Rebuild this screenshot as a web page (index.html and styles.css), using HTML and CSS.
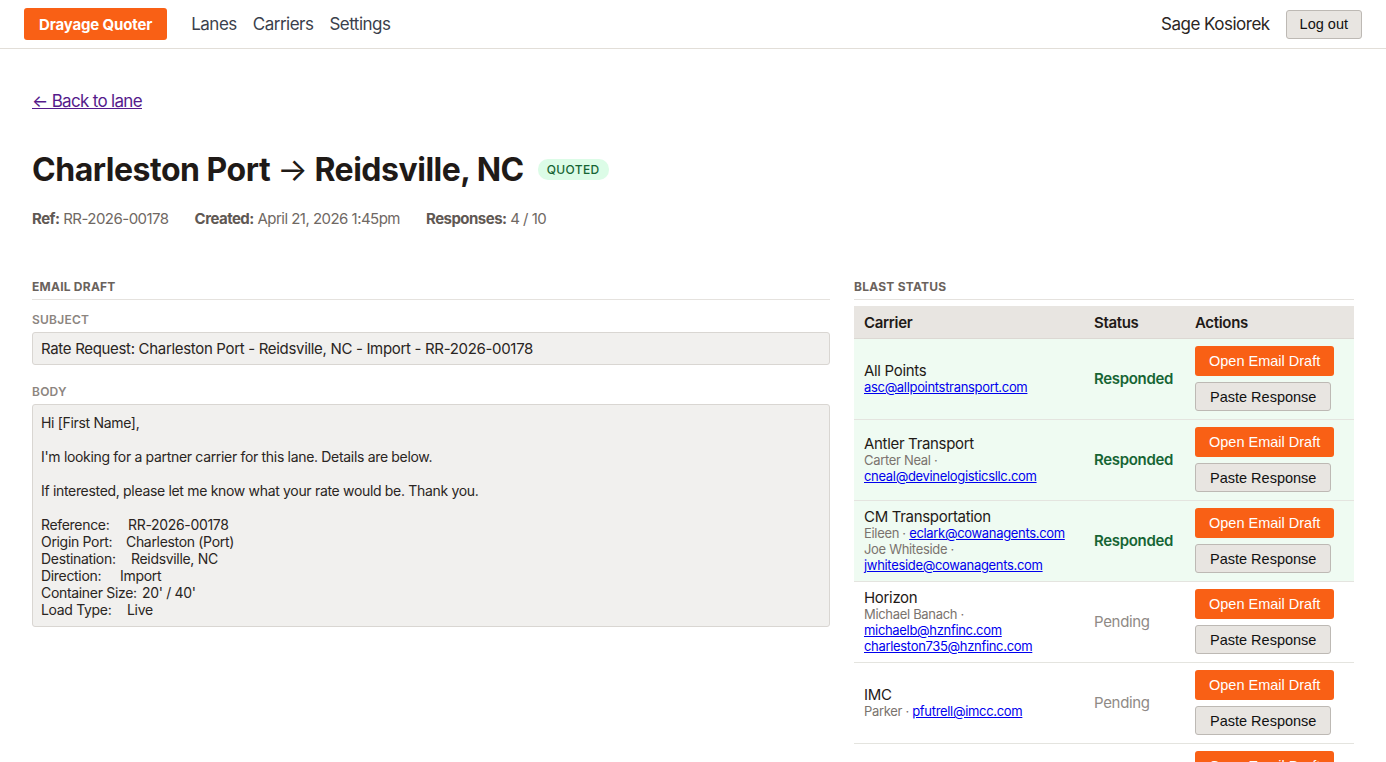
FILE: index.html
```html
<!DOCTYPE html>
<html lang="en">
<head>
    <meta charset="UTF-8">
    <meta name="viewport" content="width=device-width, initial-scale=1.0">
    <title>Charleston Port → Reidsville, NC · Drayage Quoter</title>
    <link rel="stylesheet" href="styles.css">
</head>
<body>

    <header class="topbar">
        <a href="#" class="brand">Drayage Quoter</a>
        <nav class="nav-links">
            <a href="#">Lanes</a>
            <a href="#">Carriers</a>
            <a href="#">Settings</a>
        </nav>
        <div class="user-box">
            <span class="user-name">Sage Kosiorek</span>
            <button class="btn-plain btn-logout">Log out</button>
        </div>
    </header>

    <main class="page">
        <p class="back"><a href="#">← Back to lane</a></p>

        <div class="title-row">
            <h1>Charleston Port <span class="arrow">→</span> Reidsville, NC</h1>
            <span class="badge">QUOTED</span>
        </div>

        <div class="meta">
            <span><b>Ref:</b> RR-2026-00178</span>
            <span><b>Created:</b> April 21, 2026 1:45pm</span>
            <span><b>Responses:</b> 4 / 10</span>
        </div>

        <div class="columns">
            <section>
                <h3 class="section-title">Email Draft</h3>
                <div class="field-label">Subject</div>
                <div class="field-box">Rate Request: Charleston Port - Reidsville, NC - Import - RR-2026-00178</div>

                <div class="field-label gap-top">Body</div>
                <div class="field-box body-text">Hi [First Name],

I'm looking for a partner carrier for this lane. Details are below.

If interested, please let me know what your rate would be. Thank you.

<span class="kv"><span class="k1">Reference:</span>RR-2026-00178</span>
<span class="kv"><span class="k2">Origin Port:</span>Charleston (Port)</span>
<span class="kv"><span class="k3">Destination:</span>Reidsville, NC</span>
<span class="kv"><span class="k4">Direction:</span>Import</span>
<span class="kv"><span class="k5">Container Size:</span>20' / 40'</span>
<span class="kv"><span class="k6">Load Type:</span>Live</span></div>
            </section>

            <section>
                <h3 class="section-title">Blast Status</h3>
                <table class="blast">
                    <thead>
                        <tr>
                            <th class="col-carrier">Carrier</th>
                            <th class="col-status">Status</th>
                            <th>Actions</th>
                        </tr>
                    </thead>
                    <tbody>
                        <tr class="responded">
                            <td>
                                <div class="carrier">All Points</div>
                                <div class="contact"><a href="#">asc@allpointstransport.com</a></div>
                            </td>
                            <td class="status ok">Responded</td>
                            <td class="actions">
                                <button class="btn-orange">Open Email Draft</button>
                                <button class="btn-plain">Paste Response</button>
                            </td>
                        </tr>
                        <tr class="responded">
                            <td>
                                <div class="carrier">Antler Transport</div>
                                <div class="contact">Carter Neal · <a href="#">cneal@devinelogisticsllc.com</a></div>
                            </td>
                            <td class="status ok">Responded</td>
                            <td class="actions">
                                <button class="btn-orange">Open Email Draft</button>
                                <button class="btn-plain">Paste Response</button>
                            </td>
                        </tr>
                        <tr class="responded">
                            <td>
                                <div class="carrier">CM Transportation</div>
                                <div class="contact">Eileen · <a href="#">eclark@cowanagents.com</a></div>
                                <div class="contact">Joe Whiteside · <a href="#">jwhiteside@cowanagents.com</a></div>
                            </td>
                            <td class="status ok">Responded</td>
                            <td class="actions">
                                <button class="btn-orange">Open Email Draft</button>
                                <button class="btn-plain">Paste Response</button>
                            </td>
                        </tr>
                        <tr>
                            <td>
                                <div class="carrier">Horizon</div>
                                <div class="contact">Michael Banach · <a href="#">michaelb@hznfinc.com</a> <a href="#">charleston735@hznfinc.com</a></div>
                            </td>
                            <td class="status">Pending</td>
                            <td class="actions">
                                <button class="btn-orange">Open Email Draft</button>
                                <button class="btn-plain">Paste Response</button>
                            </td>
                        </tr>
                        <tr>
                            <td>
                                <div class="carrier">IMC</div>
                                <div class="contact">Parker · <a href="#">pfutrell@imcc.com</a></div>
                            </td>
                            <td class="status">Pending</td>
                            <td class="actions">
                                <button class="btn-orange">Open Email Draft</button>
                                <button class="btn-plain">Paste Response</button>
                            </td>
                        </tr>
                        <tr>
                            <td>
                                <div class="carrier">Mercury Drayage</div>
                                <div class="contact">Dispatch · <a href="#">dispatch@mercurydray.com</a></div>
                            </td>
                            <td class="status">Pending</td>
                            <td class="actions">
                                <button class="btn-orange">Open Email Draft</button>
                                <button class="btn-plain">Paste Response</button>
                            </td>
                        </tr>
                    </tbody>
                </table>
            </section>
        </div>
    </main>

</body>
</html>
```

FILE: styles.css
```css
body {
    margin: 0;
    font-family: Inter, "Noto Sans", sans-serif;
    color: #1f1a17;
    background: #fff;
    letter-spacing: -0.02em;
}

/* top bar */
.topbar {
    display: flex;
    align-items: center;
    height: 48px;
    padding: 0 24px;
    border-bottom: 1px solid #e2ded8;
}

.brand {
    display: flex;
    align-items: center;
    height: 32px;
    padding: 0 15px;
    background: #f96015;
    color: #fff;
    font-size: 15px;
    font-weight: 700;
    text-decoration: none;
    border-radius: 3px;
    letter-spacing: -0.01em;
}

.nav-links {
    display: flex;
    gap: 16px;
    margin-left: 24px;
}

.nav-links a {
    color: #3b3f4c;
    font-size: 17px;
    text-decoration: none;
    letter-spacing: -0.03em;
}

.user-box {
    display: flex;
    align-items: center;
    gap: 16px;
    margin-left: auto;
}

.user-name {
    font-size: 17px;
    color: #2b2623;
    letter-spacing: -0.03em;
}

button {
    font-family: "Liberation Sans", Arial, sans-serif;
    font-size: 14.5px;
    letter-spacing: 0;
    cursor: pointer;
    border-radius: 3px;
}

.btn-plain {
    background: #e8e5e1;
    color: #111;
    border: 1px solid #bdb9b4;
    height: 29px;
    padding: 0 14px;
}

.btn-logout {
    padding: 0 13px;
}

.btn-orange {
    background: #f96015;
    color: #fff;
    border: none;
    height: 30px;
    padding: 0 14px;
}

/* page body */
.page {
    padding: 0 32px 40px;
}

.back {
    margin: 42px 0 0;
    font-size: 17px;
    letter-spacing: -0.04em;
}

.back a {
    color: #551a8b;
}

.title-row {
    display: flex;
    align-items: center;
    gap: 14px;
    margin-top: 39px;
}

h1 {
    margin: 0;
    font-size: 32px;
    font-weight: 700;
    letter-spacing: -0.015em;
    color: #1f1a17;
}

h1 .arrow {
    font-weight: 400;
}

.badge {
    background: #dcfce7;
    color: #166534;
    font-size: 12px;
    font-weight: 500;
    padding: 3px 9px;
    border-radius: 10px;
    letter-spacing: 0.03em;
}

.meta {
    display: flex;
    gap: 26px;
    margin-top: 20px;
    font-size: 15px;
    color: #6f6863;
    letter-spacing: -0.035em;
}

.meta b {
    font-weight: 700;
    color: #5f5853;
}

.columns {
    display: grid;
    grid-template-columns: 1fr 500px;
    gap: 24px;
    margin-top: 51px;
    align-items: start;
}

.section-title {
    margin: 0;
    padding-bottom: 5px;
    border-bottom: 1px solid #e5e2de;
    font-size: 12px;
    font-weight: 700;
    text-transform: uppercase;
    color: #6a625c;
    letter-spacing: 0.02em;
}

.field-label {
    margin-top: 12px;
    margin-bottom: 5px;
    font-size: 12px;
    font-weight: 600;
    text-transform: uppercase;
    color: #8c857f;
    letter-spacing: 0.02em;
}

.field-label.gap-top {
    margin-top: 19px;
}

.field-box {
    background: #f1f0ee;
    border: 1px solid #d9d6d2;
    border-radius: 3px;
    padding: 6px 8px;
    font-size: 15px;
    color: #2a2522;
}

.body-text {
    white-space: pre-wrap;
    font-size: 14px;
    line-height: 17px;
    padding: 9px 8px 8px;
}

.kv > span {
    display: inline-block;
}

.k1 { width: 87px; }
.k2 { width: 85px; }
.k3 { width: 90px; }
.k4 { width: 79px; }
.k5 { width: 101px; }
.k6 { width: 86px; }

/* blast table */
.blast {
    width: 100%;
    border-collapse: collapse;
    margin-top: 6px;
}

.blast th {
    background: #e8e5e1;
    text-align: left;
    font-size: 15px;
    font-weight: 600;
    padding: 7px 10px 6px;
    border-bottom: 1px solid #dcd8d3;
}

.col-carrier {
    width: 210px;
}

.col-status {
    width: 81px;
}

.blast td {
    padding: 7px 10px 8px;
    border-bottom: 1px solid #e4e4df;
    vertical-align: middle;
}

.blast tr.responded td {
    background: #effbf2;
}

.carrier {
    font-size: 15px;
    line-height: 17px;
    color: #1f1a17;
}

.contact {
    font-size: 13px;
    line-height: 16px;
    color: #7a736e;
}

.contact a {
    color: #0000ee;
}

.status {
    font-size: 15px;
    color: #8f8a86;
}

.status.ok {
    color: #166534;
    font-weight: 600;
}

.actions button {
    display: block;
}

.actions .btn-plain {
    margin-top: 6px;
}
```
